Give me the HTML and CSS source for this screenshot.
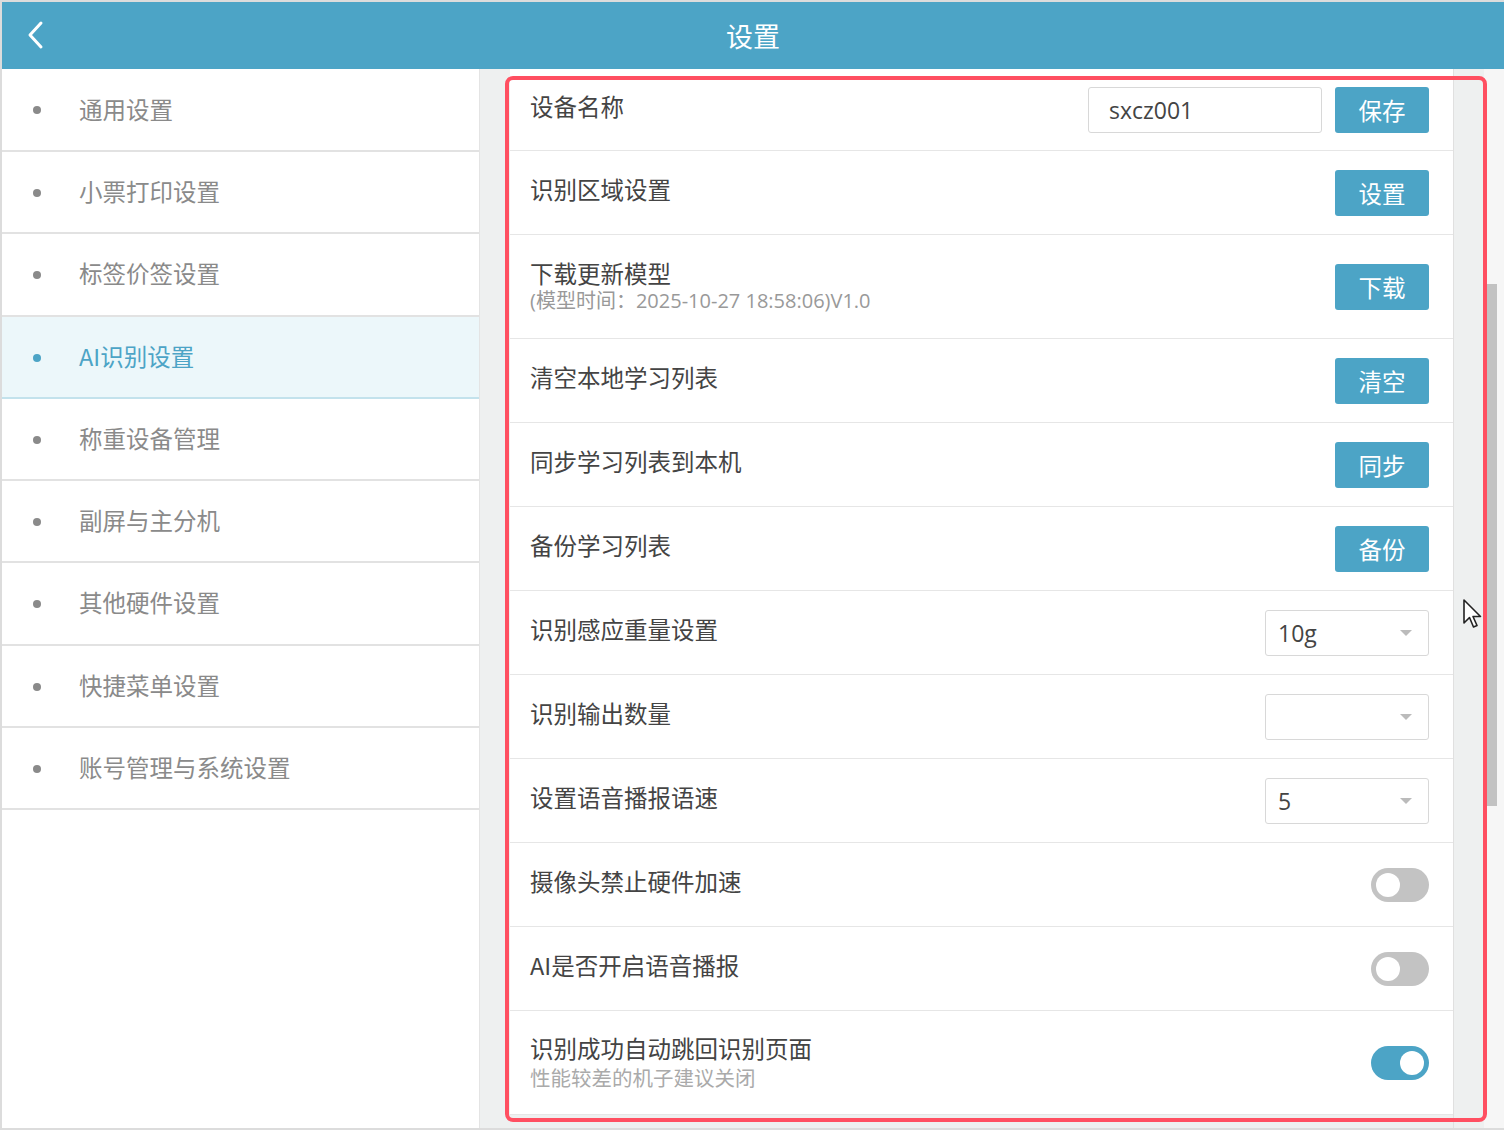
FILE: index.html
```html
<!DOCTYPE html>
<html lang="zh-CN">
<head>
    <meta charset="UTF-8">
    <meta name="viewport" content="width=device-width, initial-scale=1.0">
    <title>设置</title>
    <link rel="stylesheet" href="styles.css">
</head>
<body>
    <div class="app">
        <header class="topbar">
            <a class="back" href="#">
                <svg width="18" height="30" viewBox="0 0 18 30"><path d="M15 3 L4 15 L15 27" fill="none" stroke="#fff" stroke-width="3" stroke-linecap="round" stroke-linejoin="round"/></svg>
            </a>
            <h1>设置</h1>
        </header>

        <div class="body">
            <!-- Left menu -->
            <nav class="menu">
                <a class="menu-item" href="#">通用设置</a>
                <a class="menu-item" href="#">小票打印设置</a>
                <a class="menu-item" href="#">标签价签设置</a>
                <a class="menu-item active" href="#">AI识别设置</a>
                <a class="menu-item" href="#">称重设备管理</a>
                <a class="menu-item" href="#">副屏与主分机</a>
                <a class="menu-item" href="#">其他硬件设置</a>
                <a class="menu-item" href="#">快捷菜单设置</a>
                <a class="menu-item" href="#">账号管理与系统设置</a>
            </nav>

            <main class="content">
                <div class="panel">
                    <div class="row first">
                        <div class="label">设备名称</div>
                        <div class="controls">
                            <input class="text-input" type="text" value="sxcz001">
                            <button class="btn">保存</button>
                        </div>
                    </div>
                    <div class="row">
                        <div class="label">识别区域设置</div>
                        <button class="btn">设置</button>
                    </div>
                    <div class="row tall">
                        <div class="label">
                            <span>下载更新模型</span>
                            <span class="sub">(模型时间：2025-10-27 18:58:06)V1.0</span>
                        </div>
                        <button class="btn">下载</button>
                    </div>
                    <div class="row">
                        <div class="label">清空本地学习列表</div>
                        <button class="btn">清空</button>
                    </div>
                    <div class="row">
                        <div class="label">同步学习列表到本机</div>
                        <button class="btn">同步</button>
                    </div>
                    <div class="row">
                        <div class="label">备份学习列表</div>
                        <button class="btn">备份</button>
                    </div>
                    <div class="row">
                        <div class="label">识别感应重量设置</div>
                        <div class="select">10g</div>
                    </div>
                    <div class="row">
                        <div class="label">识别输出数量</div>
                        <div class="select"></div>
                    </div>
                    <div class="row">
                        <div class="label">设置语音播报语速</div>
                        <div class="select">5</div>
                    </div>
                    <div class="row">
                        <div class="label">摄像头禁止硬件加速</div>
                        <span class="switch"></span>
                    </div>
                    <div class="row">
                        <div class="label">AI是否开启语音播报</div>
                        <span class="switch"></span>
                    </div>
                    <div class="row tall">
                        <div class="label">
                            <span>识别成功自动跳回识别页面</span>
                            <span class="sub small">性能较差的机子建议关闭</span>
                        </div>
                        <span class="switch on"></span>
                    </div>
                </div>
                <div class="gutter"></div>
                <div class="scroll-track"><div class="scroll-thumb"></div></div>
            </main>
        </div>

        <div class="focus-frame"></div>
        <svg class="pointer" width="22" height="32" viewBox="0 0 22 32">
            <path d="M2 2 L2 25 L7.5 19.5 L11.5 29 L15 27.5 L11 18.5 L18.5 18.5 Z" fill="#fff" stroke="#222" stroke-width="1.6" stroke-linejoin="round"/>
        </svg>
    </div>
</body>
</html>
```

FILE: styles.css
```css
* {
    box-sizing: border-box;
}
body {
    margin: 0;
    font-family: "Noto Sans CJK SC", "Noto Sans", sans-serif;
    background: #fff;
}
.app {
    position: relative;
    width: 1504px;
    height: 1130px;
    border: 2px solid #dcdcdc;
    border-right: none;
    display: flex;
    flex-direction: column;
    overflow: hidden;
}
.topbar {
    height: 67px;
    flex-shrink: 0;
    background: #4ca4c6;
    display: flex;
    align-items: center;
    justify-content: center;
    position: relative;
}
.topbar h1 {
    margin: 0;
    color: #fff;
    font-size: 27px;
    font-weight: normal;
}
.back {
    position: absolute;
    left: 24px;
    top: 18px;
}
.body {
    flex: 1;
    display: flex;
    min-height: 0;
}
.menu {
    width: 478px;
    flex-shrink: 0;
    background: #fff;
    border-right: 1px solid #e4e4e4;
}
.menu-item {
    display: flex;
    align-items: center;
    height: 82.25px;
    padding-left: 77px;
    padding-bottom: 2px;
    position: relative;
    border-bottom: 2px solid #e2e2e2;
    color: #8a8a8a;
    font-size: 23.5px;
    text-decoration: none;
}
.menu-item:first-child {
    height: 83px;
}
.menu-item::before {
    content: "";
    position: absolute;
    left: 31px;
    top: 37px;
    width: 8px;
    height: 8px;
    border-radius: 50%;
    background: #8a8a8a;
}
.menu-item.active {
    background: #ecf7fa;
    color: #4ca4c6;
    border-bottom-color: #c3e2ec;
}
.menu-item.active::before {
    background: #4ca4c6;
}
.content {
    flex: 1;
    display: flex;
    background: #eef0f0;
    padding-left: 30px;
}
.panel {
    width: 943px;
    background: #fff;
    align-self: flex-start;
}
.row {
    height: 84px;
    padding: 0 24px 0 20px;
    display: flex;
    align-items: center;
    justify-content: space-between;
    border-bottom: 1px solid #e6e6e6;
}
.row.first {
    height: 82px;
}
.row.tall {
    height: 104px;
}
.label {
    color: #444;
    font-size: 23.5px;
    line-height: 1.2;
    display: flex;
    flex-direction: column;
    margin-bottom: 6px;
}
.row.tall .label {
    margin-bottom: 0;
}
.sub {
    color: #999;
    font-family: "Open Sans", "Noto Sans CJK SC", sans-serif;
    font-size: 20px;
    line-height: 1.3;
    margin-top: 1px;
}
.sub.small {
    font-family: "Noto Sans CJK SC", sans-serif;
    font-size: 20.5px;
    line-height: 1.25;
    margin-top: 3px;
    color: #aaa;
}
.controls {
    display: flex;
    gap: 13px;
}
.text-input {
    width: 234px;
    height: 46px;
    border: 1px solid #d8d8d8;
    border-radius: 3px;
    padding: 0 20px;
    font-family: "Open Sans", sans-serif;
    font-size: 23px;
    color: #444;
}
.btn {
    width: 94px;
    height: 46px;
    border: none;
    border-radius: 3px;
    background: #4ca4c6;
    color: #fff;
    font-family: "Noto Sans CJK SC", sans-serif;
    font-size: 23.5px;
}
.select {
    width: 164px;
    height: 46px;
    border: 1px solid #d8d8d8;
    border-radius: 3px;
    padding-left: 12px;
    display: flex;
    align-items: center;
    position: relative;
    font-family: "Open Sans", sans-serif;
    font-size: 23px;
    color: #444;
}
.select::after {
    content: "";
    position: absolute;
    right: 16px;
    top: 19px;
    border-left: 6px solid transparent;
    border-right: 6px solid transparent;
    border-top: 6px solid #bbb;
}
.switch {
    width: 58px;
    height: 34px;
    border-radius: 17px;
    background: #c3c3c3;
    position: relative;
}
.switch::after {
    content: "";
    position: absolute;
    left: 5px;
    top: 5px;
    width: 24px;
    height: 24px;
    border-radius: 50%;
    background: #fff;
}
.switch.on {
    background: #4ca4c6;
}
.switch.on::after {
    left: 29px;
}
.gutter {
    width: 31px;
    border-left: 1px solid #e0e0e0;
}
.scroll-track {
    flex: 1;
    background: #f6f6f6;
    padding-left: 3px;
}
.scroll-thumb {
    width: 10px;
    height: 522px;
    margin-top: 215px;
    background: #c2c2c2;
}
.focus-frame {
    position: absolute;
    left: 503px;
    top: 74px;
    width: 982px;
    height: 1046px;
    border: 4px solid #ff4f61;
    border-radius: 8px;
    pointer-events: none;
}
.pointer {
    position: absolute;
    left: 1460px;
    top: 596px;
}
```
